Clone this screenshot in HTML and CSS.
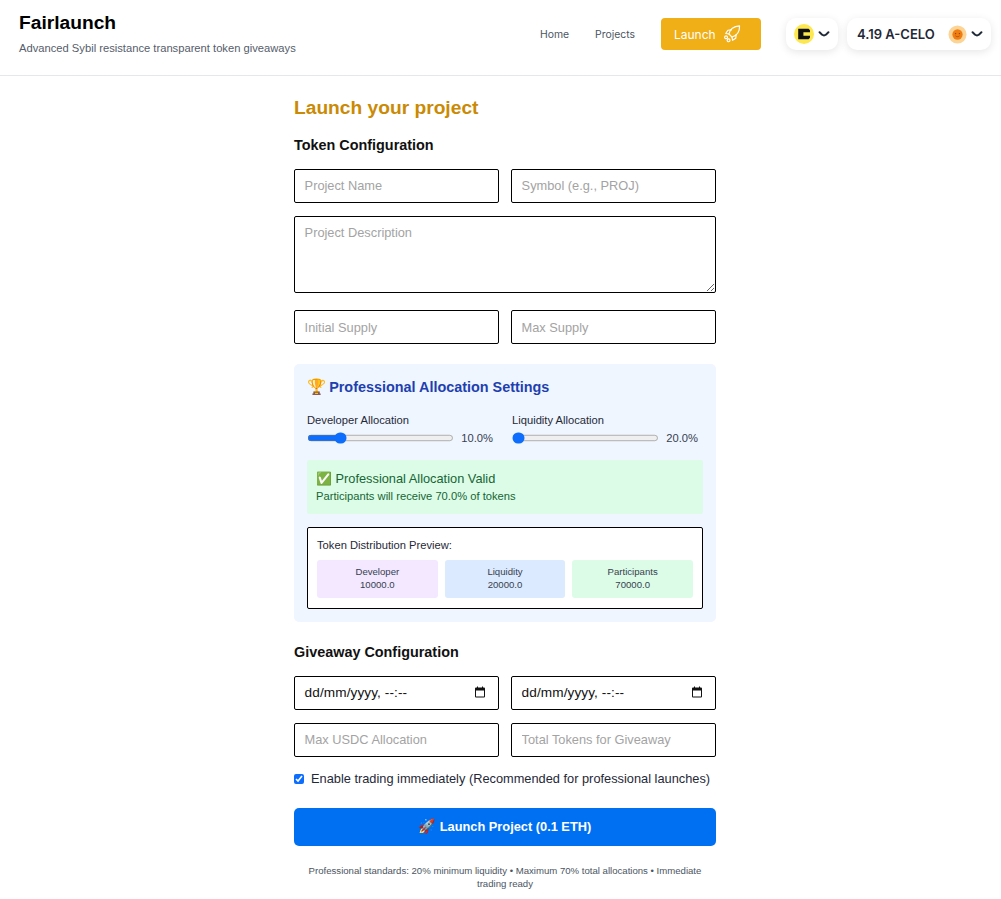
FILE: index.html
```html
<!DOCTYPE html>
<html lang="en">
<head>
<meta charset="utf-8">
<title>Fairlaunch</title>
<link rel="stylesheet" href="styles.css">
</head>
<body>
<header class="topbar">
  <div class="brand">
    <h1 class="brand-title">Fairlaunch</h1>
    <p class="brand-sub">Advanced Sybil resistance transparent token giveaways</p>
  </div>
  <nav class="nav">
    <a class="nav-link nav-home">Home</a>
    <a class="nav-link nav-projects">Projects</a>
    <a class="nav-launch">Launch
      <svg class="nav-rocket" viewBox="0 0 20 20" fill="none" stroke="currentColor" stroke-width="1.300" stroke-linejoin="round" stroke-linecap="round">
        <path d="M6.600 10 C7.600 5 12 1.400 18.400 1 C18.600 7.400 15 11.800 10 13.400 Z"/>
        <path d="M6.600 10 L3 9.400 L5.400 5.800 L9.400 5.400"/>
        <path d="M10 13.400 L10.600 17 L14.200 14.600 L14.600 10.600"/>
        <circle cx="3.400" cy="13.600" r="1.600"/>
        <circle cx="6.200" cy="17" r="1.600"/>
      </svg>
    </a>
  </nav>
  <div class="pill pill-chain">
    <svg class="chain-logo" viewBox="0 0 20 20"><circle cx="10" cy="10" r="10" fill="#fde84f"/><path d="M4.200 4.800h10.400l1.400 1.400v2H9.400v3.600H16v2l-1.400 1.400H4.200z" fill="#111"/></svg>
    <svg class="chev" viewBox="0 0 12 8" fill="none" stroke="#1f2937" stroke-width="2" stroke-linecap="round"><path d="M1.500 2.200 C3.500 4.600 4.800 5.400 6 5.400 S8.500 4.600 10.500 2.200"/></svg>
  </div>
  <div class="pill pill-balance">
    <span class="balance">4.19 A-CELO</span>
    <svg class="avatar" viewBox="0 0 20 20"><circle cx="10" cy="10" r="9.500" fill="#fcd596"/><circle cx="10" cy="10" r="5.400" fill="#f07d12"/><circle cx="8" cy="9" r=".7" fill="#8a3c00"/><circle cx="12" cy="9" r=".7" fill="#8a3c00"/><path d="M7.800 11.400c1.200 1.200 3.200 1.200 4.400 0" stroke="#8a3c00" stroke-width=".6" fill="none"/></svg>
    <svg class="chev" viewBox="0 0 12 8" fill="none" stroke="#1f2937" stroke-width="2" stroke-linecap="round"><path d="M1.500 2.200 C3.500 4.600 4.800 5.400 6 5.400 S8.500 4.600 10.500 2.200"/></svg>
  </div>
</header>

<main class="main">
  <form class="form">
    <h2 class="page-title">Launch your project</h2>
    <h3 class="section-title">Token Configuration</h3>
    <div class="row">
      <input class="field field-up" placeholder="Project Name">
      <input class="field field-up" placeholder="Symbol (e.g., PROJ)">
    </div>
    <textarea class="field area" placeholder="Project Description"></textarea>
    <div class="row row-supply">
      <input class="field" placeholder="Initial Supply">
      <input class="field" placeholder="Max Supply">
    </div>

    <section class="panel">
      <h4 class="panel-title"><span class="emoji emoji-trophy">🏆</span> Professional Allocation Settings</h4>
      <div class="sliders">
        <div class="slider-col">
          <label class="slider-label">Developer Allocation</label>
          <div class="slider-line"><input class="slider" type="range" min="0" max="50" value="10"><span class="slider-val">10.0%</span></div>
        </div>
        <div class="slider-col">
          <label class="slider-label">Liquidity Allocation</label>
          <div class="slider-line"><input class="slider" type="range" min="20" max="80" value="20"><span class="slider-val">20.0%</span></div>
        </div>
      </div>
      <div class="valid">
        <div class="valid-title"><span class="emoji">✅</span> Professional Allocation Valid</div>
        <div class="valid-sub">Participants will receive 70.0% of tokens</div>
      </div>
      <div class="preview">
        <div class="preview-title">Token Distribution Preview:</div>
        <div class="tiles">
          <div class="tile tile-dev">Developer<br>10000.0</div>
          <div class="tile tile-liq">Liquidity<br>20000.0</div>
          <div class="tile tile-par">Participants<br>70000.0</div>
        </div>
      </div>
    </section>

    <h3 class="section-title giveaway-title">Giveaway Configuration</h3>
    <div class="row">
      <div class="field date"><span>dd/mm/yyyy, --:--</span><svg class="cal" viewBox="0 0 12 12"><path d="M3 .5v1H2A1 1 0 0 0 1 2.500v8a1 1 0 0 0 1 1h8a1 1 0 0 0 1-1v-8a1 1 0 0 0-1-1H9v-1H8v1H4v-1zM2 4.500h8v6H2z" fill="#111"/></svg></div>
      <div class="field date"><span>dd/mm/yyyy, --:--</span><svg class="cal" viewBox="0 0 12 12"><path d="M3 .5v1H2A1 1 0 0 0 1 2.500v8a1 1 0 0 0 1 1h8a1 1 0 0 0 1-1v-8a1 1 0 0 0-1-1H9v-1H8v1H4v-1zM2 4.500h8v6H2z" fill="#111"/></svg></div>
    </div>
    <div class="row row-alloc">
      <input class="field field-up" placeholder="Max USDC Allocation">
      <input class="field field-up" placeholder="Total Tokens for Giveaway">
    </div>
    <label class="check"><input class="check-box" type="checkbox" checked> Enable trading immediately (Recommended for professional launches)</label>
    <button class="submit" type="button"><span class="emoji emoji-rocket">🚀</span> Launch Project (0.1 ETH)</button>
    <p class="note">Professional standards: 20% minimum liquidity • Maximum 70% total allocations • Immediate trading ready</p>
  </form>
</main>
</body>
</html>
```
FILE: styles.css
```css
* { box-sizing: border-box; }
html, body { margin: 0; padding: 0; background: #fff; }
body { font-family: "Liberation Sans", Arial, sans-serif; color: #111; overflow: hidden; height: 899px; }

.topbar { height: 76px; border-bottom: 1px solid #e5e7eb; display: flex; align-items: flex-start; padding: 0 10px 0 19px; }
.brand { flex: 1; padding-top: 11px; }
.brand-title { margin: 0; font-size: 19.2px; line-height: 24px; font-weight: 700; color: #000; }
.brand-sub { margin: 6px 0 0; font-size: 11.2px; line-height: 14px; color: #555d6b; }

.nav { display: flex; align-items: center; height: 32px; margin-top: 18px; font-family: Inter, sans-serif; font-size: 10.4px; color: #4b5563; }
.nav-home { margin-right: 26px; }
.nav-projects { margin-right: 26px; }
.nav-launch { width: 100px; height: 32px; border-radius: 4px; background: #f0ae17; color: #fff; font-size: 12px; display: flex; align-items: center; padding-left: 13px; gap: 7px; }
.nav-rocket { width: 18px; height: 18px; }

.pill { height: 32px; margin-top: 18px; background: #fff; border-radius: 10px; box-shadow: 0 2px 8px rgba(0,0,0,.1); display: flex; align-items: center; font-family: Inter, sans-serif; }
.pill-chain { width: 52px; margin-left: 25px; padding-left: 8px; }
.chain-logo { width: 20px; height: 20px; }
.chev { width: 12px; height: 8px; margin-left: 4px; }
.pill-balance { width: 144px; margin-left: 9px; padding-left: 10px; }
.balance { font-size: 13px; font-weight: 600; color: #1f2937; width: 92px; white-space: nowrap; }
.avatar { width: 19px; height: 19px; margin-left: -1px; }

.main { padding-left: 294px; }
.form { width: 422px; }
.page-title { margin: 0; padding-top: 20px; font-size: 19.2px; line-height: 24px; font-weight: 700; color: #ca8a04; }
.section-title { margin: 16px 0 15px; font-size: 14.4px; line-height: 18px; font-weight: 700; color: #111; }

.row { display: grid; grid-template-columns: 205px 205px; column-gap: 12px; }
.field { display: block; height: 34px; width: 100%; border: 1px solid #000; border-radius: 2px; padding: 0 9.6px; font-family: "Liberation Sans", Arial, sans-serif; font-size: 12.8px; color: #111; background: #fff; outline: none; }
.field::placeholder { color: #a3a3a3; opacity: 1; }
.field-up { padding-bottom: 2px; }
.area { height: 77px; margin-top: 13px; padding: 8px 9.6px; }
.row-supply { margin-top: 17px; }

.panel { margin-top: 20px; height: 258px; background: #eff6ff; border-radius: 5px; padding: 12px 13px 0; }
.panel-title { margin: 0; font-size: 14.4px; line-height: 22px; font-weight: 700; color: #1e40af; }
.emoji { font-family: "Noto Color Emoji", "Liberation Sans", sans-serif; font-weight: 400; }
.emoji-trophy { font-size: 15.4px; margin-right: -1px; }
.emoji-rocket { font-size: 14px; }
.sliders { display: grid; grid-template-columns: 192px 192px; column-gap: 13px; margin-top: 16px; }
.slider-label { display: block; font-size: 11.2px; line-height: 13px; color: #1f2937; }
.slider-line { display: flex; align-items: center; margin-top: 3px; height: 16px; }
.slider { zoom: 0.8; width: 184px; height: 20px; margin: 0; accent-color: #0d6efd; flex: none; }
.slider-val { margin-left: 7px; font-size: 11.2px; color: #374151; white-space: nowrap; }
.valid { margin-top: 14px; height: 54px; background: #dcfce7; border-radius: 2px; padding: 10px 9px 0; color: #166534; }
.valid-title { font-size: 12.8px; line-height: 17px; }
.valid-sub { font-size: 11.2px; line-height: 14px; margin-top: 2px; }
.preview { margin-top: 13px; height: 82px; background: #fff; border: 1px solid #000; border-radius: 2px; padding: 10px 9px 0; }
.preview-title { font-size: 11.2px; line-height: 14px; color: #1f2937; }
.tiles { display: grid; grid-template-columns: repeat(3, 1fr); column-gap: 7px; margin-top: 8px; }
.tile { height: 38px; border-radius: 3px; text-align: center; font-size: 9.6px; line-height: 13px; padding-top: 5px; color: #374151; }
.tile-dev { background: #f3e8ff; }
.tile-liq { background: #dbeafe; }
.tile-par { background: #dcfce7; }

.giveaway-title { margin: 21px 0 15px; }
.date { display: flex; align-items: center; justify-content: space-between; padding: 0 12px 2px 9.6px; color: #111; font-size: 13.6px; letter-spacing: .1px; }
.cal { width: 12px; height: 12px; }
.row-alloc { margin-top: 13px; }
.check { display: flex; align-items: center; margin-top: 14px; font-size: 12.8px; line-height: 16px; color: #1f2937; white-space: nowrap; }
.check-box { width: 10px; height: 10px; margin: 0 7px 0 0; accent-color: #0d6efd; }
.submit { display: block; width: 100%; height: 38px; margin-top: 21px; padding: 0 0 2px; border: 0; border-radius: 5px; background: #0070f3; color: #fff; font-family: "Liberation Sans", Arial, sans-serif; font-size: 12.8px; font-weight: 700; }
.note { margin: 18px 0 0; font-size: 9.6px; line-height: 13px; color: #4b5563; text-align: center; }
```
